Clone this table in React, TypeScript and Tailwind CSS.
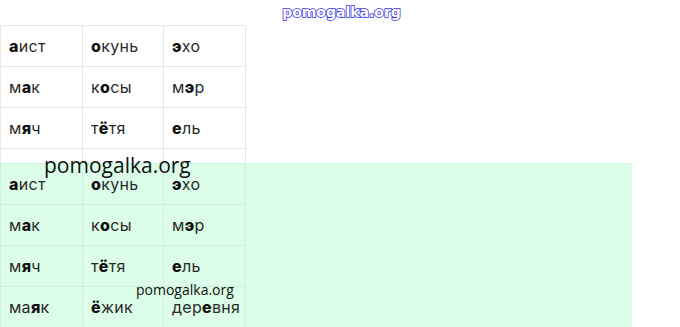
import React from 'react';

type Word = [string, string, string]; // before, stressed, after

const rows: Word[][] = [
  [['', 'а', 'ист'], ['', 'о', 'кунь'], ['', 'э', 'хо']],
  [['м', 'а', 'к'], ['к', 'о', 'сы'], ['м', 'э', 'р']],
  [['м', 'я', 'ч'], ['т', 'ё', 'тя'], ['', 'е', 'ль']],
  [['ма', 'я', 'к'], ['', 'ё', 'жик'], ['дер', 'е', 'вня']],
];

function Cell({ word, line }: { word: Word; line: string }) {
  return (
    <div className={`h-[41px] flex items-center pl-2 border-r border-b ${line}`}>
      <span>
        {word[0]}
        <b className="font-extrabold text-[#111]">{word[1]}</b>
        {word[2]}
      </span>
    </div>
  );
}

function WordTable({ items, line }: { items: Word[][]; line: string }) {
  return (
    <div className={`grid grid-cols-[82px_81px_82px] w-[245px] border-l ${line}`}>
      {items.map((row, i) =>
        row.map((w, j) => <Cell key={`${i}-${j}`} word={w} line={line} />)
      )}
    </div>
  );
}

export default function App() {
  return (
    <div className="relative w-[680px] h-[327px] overflow-hidden bg-white font-['Inter',sans-serif] text-[16px] tracking-[0.3px] text-[#2a2a2a]">
      {/* Top watermark */}
      <div className="h-[25px] flex justify-center">
        <span className="ml-[3px] pt-[1px] font-['DejaVu_Sans',sans-serif] font-bold text-[14px] leading-[22px] tracking-normal text-white [-webkit-text-stroke:1.6px_#3535e6] [paint-order:stroke_fill]">
          pomogalka.org
        </span>
      </div>

      {/* Upper table */}
      <div className="border-t border-[#e6e6e6] w-[245px]">
        <WordTable items={rows.slice(0, 3)} line="border-[#e6e6e6]" />
        <div className="grid grid-cols-[82px_81px_82px] h-[14px] border-l border-[#e6e6e6]">
          <div className="border-r border-[#e6e6e6]" />
          <div className="border-r border-[#e6e6e6]" />
          <div className="border-r border-[#e6e6e6]" />
        </div>
      </div>

      {/* Green block */}
      <div className="w-[632px] h-[164px] bg-[#dcfde8]">
        <div className="border-t border-[#ccf0dc] w-[245px]">
          <WordTable items={rows} line="border-[#ccf0dc]" />
        </div>
      </div>

      {/* Overlay watermarks */}
      <span className="absolute left-[44px] top-[151px] font-['Open_Sans',sans-serif] text-[21px] leading-[28px] tracking-normal text-[#111]">
        pomogalka.org
      </span>
      <span className="absolute left-[136px] top-[280px] font-['Open_Sans',sans-serif] text-[14px] leading-[19px] tracking-normal text-[#111]">
        pomogalka.org
      </span>
    </div>
  );
}
